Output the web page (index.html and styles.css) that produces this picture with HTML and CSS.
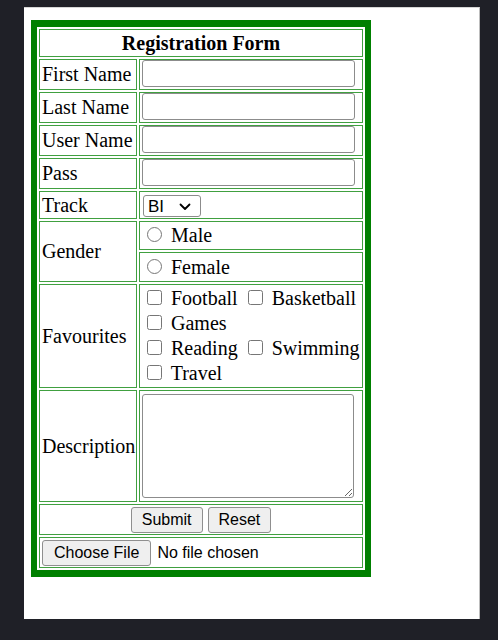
FILE: index.html
```html
<!DOCTYPE html>
<html lang="en">
<head>
<meta charset="utf-8">
<title>Registration Form</title>
<link rel="stylesheet" href="styles.css">
</head>
<body>
<div class="page">
<form class="form">
<table class="reg">
<colgroup><col class="c1"><col class="c2"></colgroup>
<tr class="r-head"><th colspan="2">Registration Form</th></tr>
<tr class="r-in"><td class="label">First Name</td><td class="field top"><input type="text" class="txt"></td></tr>
<tr class="r-in"><td class="label">Last Name</td><td class="field top"><input type="text" class="txt"></td></tr>
<tr class="r-in"><td class="label">User Name</td><td class="field top"><input type="text" class="txt"></td></tr>
<tr class="r-in"><td class="label">Pass</td><td class="field top"><input type="password" class="txt"></td></tr>
<tr class="r-track"><td class="label">Track</td><td class="field"><span class="selwrap"><select class="sel"><option>BI</option><option>SD</option><option>OS</option></select><svg class="chev" width="12" height="8" viewBox="0 0 12 8"><path d="M1.5 1.5 L6 6 L10.5 1.5" fill="none" stroke="#000" stroke-width="1.8" stroke-linecap="round" stroke-linejoin="round"/></svg></span></td></tr>
<tr class="r-male"><td rowspan="2" class="label">Gender</td><td class="opt"><label><input type="radio" name="gender" class="rad"> Male</label></td></tr>
<tr class="r-female"><td class="opt"><label><input type="radio" name="gender" class="rad"> Female</label></td></tr>
<tr class="r-fav"><td class="label">Favourites</td><td class="opt">
<div class="line"><label><input type="checkbox" class="chk"> Football</label> <label><input type="checkbox" class="chk"> Basketball</label></div>
<div class="line"><label><input type="checkbox" class="chk"> Games</label></div>
<div class="line"><label><input type="checkbox" class="chk"> Reading</label> <label><input type="checkbox" class="chk"> Swimming</label></div>
<div class="line"><label><input type="checkbox" class="chk"> Travel</label></div>
</td></tr>
<tr class="r-desc"><td class="label">Description</td><td class="field"><textarea class="area"></textarea></td></tr>
<tr class="r-btn"><td colspan="2" class="center"><input type="submit" value="Submit" class="btn"> <input type="reset" value="Reset" class="btn"></td></tr>
<tr class="r-file"><td colspan="2" class="filecell"><input type="file" class="file"></td></tr>
</table>
</form>
</div>
</body>
</html>
```
FILE: styles.css
```css
html, body {
  margin: 0;
  padding: 0;
}
body {
  background: #1f2027;
  font-family: "Liberation Serif", "Times New Roman", serif;
  color: #000;
}
.page {
  margin: 7px 0 0 24px;
  width: 456px;
  height: 612px;
  box-sizing: border-box;
  background: #fff;
  border-top: 1px solid #d6d6d6;
  border-right: 1px solid #bdbdbd;
  padding: 12px 0 0 7px;
}
.form {
  margin: 0;
}
.reg {
  border-style: solid;
  border-color: #008000;
  border-width: 7px 6px;
  border-spacing: 2px;
  width: 340px;
  table-layout: fixed;
  font-size: 20px;
  line-height: 1.15;
}
.c1 { width: 98px; }
.c2 { width: 224px; }
.reg th,
.reg td {
  border: 1px solid #40a040;
  padding: 0 2px;
}
.reg th {
  font-weight: bold;
  text-align: center;
}
.r-head { height: 28px; }
.r-in { height: 31px; }
.r-track { height: 28px; }
.r-male { height: 29px; }
.r-female { height: 30px; }
.r-fav { height: 104px; }
.r-desc { height: 112px; }
.r-btn { height: 31px; }
.r-file { height: 31px; }
.label {
  text-align: left;
  white-space: nowrap;
  padding: 0 0 0 2px;
}
.field {
  padding: 0 1px;
}
.top {
  vertical-align: top;
}
.txt {
  display: block;
  width: 213px;
  height: 27px;
  box-sizing: border-box;
  margin: 0;
  padding: 1px 3px;
  border: 1px solid #8c8c8c;
  border-radius: 3px;
  font: 16px "Liberation Sans", Arial, sans-serif;
  background: #fff;
}
.selwrap {
  position: relative;
  display: inline-block;
  vertical-align: middle;
  margin-left: 1px;
}
.sel {
  display: block;
  -webkit-appearance: none;
  appearance: none;
  width: 58px;
  height: 22px;
  margin: 0;
  padding: 0 0 0 4px;
  border: 1px solid #8c8c8c;
  border-radius: 3px;
  background-color: #fff;
  color: #000;
  font: 17px "Liberation Sans", Arial, sans-serif;
}
.chev {
  position: absolute;
  right: 10px;
  top: 8px;
  pointer-events: none;
}
.opt {
  padding: 0 2px;
}
.rad,
.chk {
  width: 15px;
  height: 15px;
  margin: 3px 4px 0 5px;
}
.line {
  height: 25px;
  line-height: 25px;
  white-space: nowrap;
}
.area {
  display: block;
  width: 212px;
  height: 104px;
  box-sizing: border-box;
  margin: 0;
  border: 1px solid #8c8c8c;
  border-radius: 3px;
  resize: both;
}
.center {
  text-align: center;
}
.btn {
  height: 26px;
  margin: 0;
  padding: 0 10px;
  border: 1px solid #8f8f8f;
  border-radius: 3px;
  background: #efefef;
  color: #000;
  font: 16px "Liberation Sans", Arial, sans-serif;
  vertical-align: middle;
}
.filecell {
  padding: 0 2px;
}
.file {
  font: 16px "Liberation Sans", Arial, sans-serif;
  color: #000;
  vertical-align: middle;
}
.file::file-selector-button {
  height: 26px;
  margin: 0 6px 0 0;
  padding: 0 11px;
  border: 1px solid #8f8f8f;
  border-radius: 3px;
  background: #efefef;
  color: #000;
  font: 16px "Liberation Sans", Arial, sans-serif;
}
```
